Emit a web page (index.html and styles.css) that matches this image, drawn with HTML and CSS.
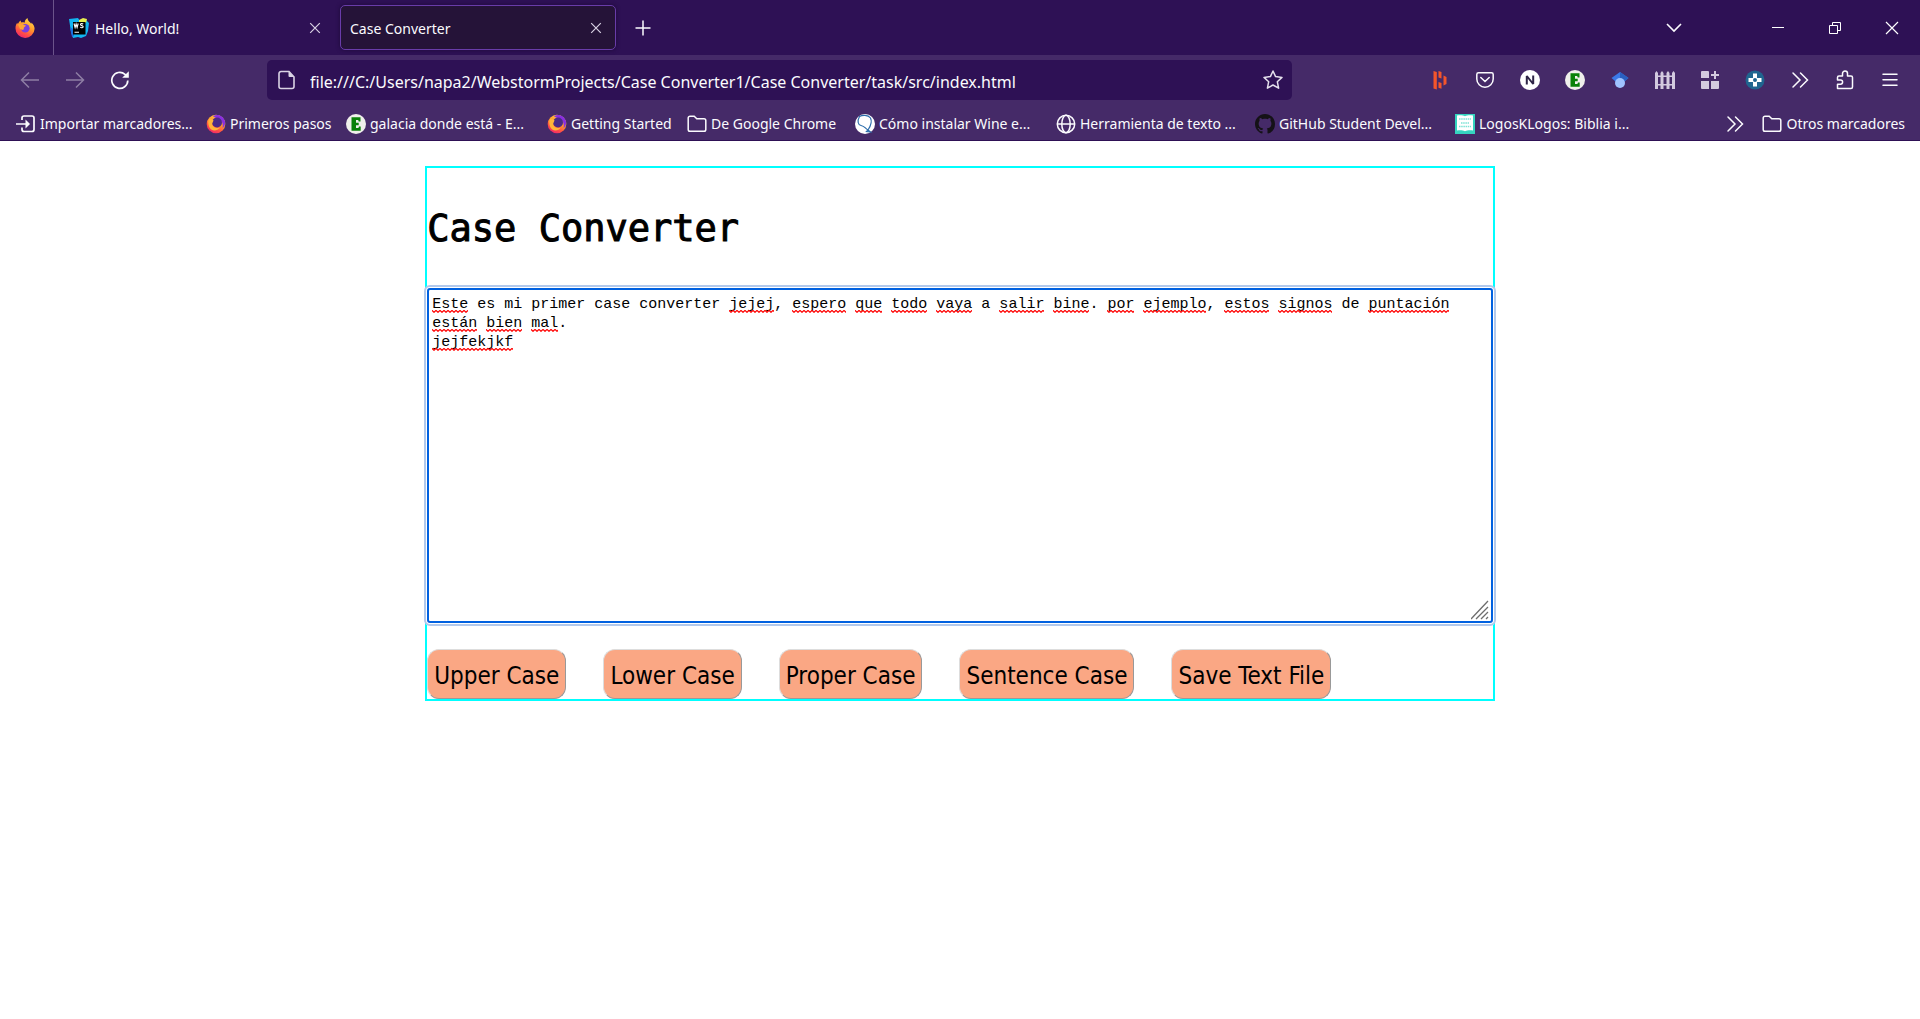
FILE: index.html
```html
<!DOCTYPE html>
<html lang="es">
<head>
<meta charset="utf-8">
<title>Case Converter</title>
<link rel="stylesheet" href="styles.css">
</head>
<body>
<svg class="defs" aria-hidden="true">
  <defs>
    <linearGradient id="flame" x1="0.8" y1="0" x2="0.3" y2="1">
      <stop offset="0" stop-color="#ffe14a"/><stop offset="0.45" stop-color="#ff9a2b"/><stop offset="0.75" stop-color="#ff4f45"/><stop offset="1" stop-color="#f0246e"/>
    </linearGradient>
    <symbol id="firefox" viewBox="0 0 20 20">
      <path fill="url(#flame)" d="M10 20A9.6 9.6 0 0 1 .5 10.3C.4 8 1.200 6 2.300 4.700c.1.7.3 1.100.6 1.400C3.600 4.500 4.500 3.300 5.800 2.600c-.1.800.1 1.400.6 1.900 1.100-.3 2.300-.2 3.300.2C9.700 2.800 10.700 1 12.500 0c.1 2 1 2.900 2.200 4 .7.700 1.200 1.300 1.500 2 .2-.5.200-1 .1-1.600C18.500 6.200 19.600 8.400 19.600 10.800A9.500 9.500 0 0 1 10 20z"/>
      <circle cx="10.300" cy="10.300" r="4.300" fill="#7a3ee0"/>
      <path fill="#ffa436" d="M3 6.500c2-1 4.500-.8 6.300.6l1.700.5c-.2 1-1.500 1.200-2 1.800-.4.700.2 2-1 2.700L5 11z"/>
    </symbol>
    <symbol id="firefox-ring" viewBox="0 0 20 20">
      <circle cx="10" cy="10" r="9.300" fill="url(#flame)"/>
      <path fill="#8a2fe0" d="M7 2.500C11-.5 17.500 1.500 19 7.500c.5 3-1 5.500-2.500 6.500 1-4-.5-8.500-5-9.500z"/>
      <circle cx="11" cy="8.500" r="5" fill="#4b2a86"/>
      <path fill="#ffb43a" d="M3 5c2-.6 3.500 0 4.500 1.500L6 10c.5 3 4 5 8 3.500-3 4-9 4-11-1C2 10 2 7 3 5z"/>
    </symbol>
    <symbol id="badge-e" viewBox="0 0 20 20">
      <circle cx="10" cy="10" r="10" fill="#efefeb"/>
      <path fill="#098109" d="M5.500 3.200h9v4.300h-1.800l-.5-1.500H10v2.700h2.700v2.600H10V14h2.400l.6-1.600h1.700v4.400H5.500z"/>
    </symbol>
    <symbol id="folder" viewBox="0 0 20 20">
      <path fill="none" stroke="#fbfbfe" stroke-width="1.500" d="M1.200 15.500V4A1.800 1.800 0 0 1 3 2.200h4.200l2.600 2.500H17a1.800 1.800 0 0 1 1.800 1.800v9a1.800 1.800 0 0 1-1.800 1.800H3a1.800 1.800 0 0 1-1.800-1.800z"/>
    </symbol>
    <symbol id="more" viewBox="0 0 20 20">
      <path fill="none" stroke="#fbfbfe" stroke-width="1.500" stroke-linecap="round" d="M3 3l7 7-7 7M10.500 3l7 7-7 7"/>
    </symbol>
    <symbol id="cross" viewBox="0 0 12 12">
      <path fill="none" stroke="#d9d2e4" stroke-width="1.200" d="M1.200 1.200l9.600 9.600M10.800 1.200l-9.600 9.600"/>
    </symbol>
  </defs>
</svg>

<header class="browser">
  <div class="tabs">
    <button class="view" aria-label="Firefox View"><svg class="i20"><use href="#firefox"/></svg></button>
    <div class="tab">
      <svg class="i20" viewBox="0 0 20 20">
        <path fill="#12b5f0" d="M0 1l9-1 2 3 6-1 3 3-1 8-2 5-5 2-3-1-5 1-2-6z"/><path fill="#e8ee4f" d="M10 2l4-2 4 1-1 4h-7z"/><path fill="#1a6fe0" d="M1 9l3 2 1 7-2 1z"/>
        <rect x="4" y="4" width="12.500" height="12.500"/>
        <path fill="none" stroke="#fff" stroke-width="1.100" d="M5 5.500l1.100 4 1-3.500 1 3.500 1.100-4M14.200 6.200c-1-1-2.800-.6-2.700.5.1 1.200 2.700.7 2.700 2 0 1.200-2 1.300-3 .4M5.500 14.300h4.500"/>
      </svg>
      <span class="tab-title">Hello, World!</span>
      <button class="close" aria-label="Cerrar Hello, World!"><svg class="i12"><use href="#cross"/></svg></button>
    </div>
    <div class="tab active">
      <span class="tab-title">Case Converter</span>
      <button class="close" aria-label="Cerrar Case Converter"><svg class="i12"><use href="#cross"/></svg></button>
    </div>
    <button class="new-tab" aria-label="Nueva pestaña"><svg class="i16" viewBox="0 0 16 16"><path fill="none" stroke="#fbfbfe" stroke-width="1.500" d="M8 .5v15M.5 8h15"/></svg></button>
    <div class="window-buttons">
      <button class="list-tabs" aria-label="Listar pestañas"><svg class="i16" viewBox="0 0 16 16"><path fill="none" stroke="#fbfbfe" stroke-width="1.600" d="M1 4l7 7 7-7"/></svg></button>
      <button aria-label="Minimizar"><svg class="i12" viewBox="0 0 12 12"><path fill="none" stroke="#fff" d="M0 5.500h12"/></svg></button>
      <button aria-label="Restaurar"><svg class="i12" viewBox="0 0 12 12"><path fill="none" stroke="#fff" d="M.5 3.500h8v8h-8zM3.500 3.500v-3h8v8h-3"/></svg></button>
      <button aria-label="Cerrar"><svg class="i14" viewBox="0 0 14 14"><path fill="none" stroke="#fff" stroke-width="1.200" d="M1 1l12 12M13 1L1 13"/></svg></button>
    </div>
  </div>

  <div class="toolbar">
    <div class="group">
      <button class="off" aria-label="Atrás"><svg class="i20" viewBox="0 0 20 20"><path fill="none" stroke="#fbfbfe" stroke-width="1.500" d="M19 10H2M9 2.500L1.500 10 9 17.500"/></svg></button>
      <button class="off" aria-label="Adelante"><svg class="i20" viewBox="0 0 20 20"><path fill="none" stroke="#fbfbfe" stroke-width="1.500" d="M1 10h17M11 2.500l7.500 7.500-7.500 7.500"/></svg></button>
      <button aria-label="Recargar"><svg class="i20" viewBox="0 0 20 20"><path fill="none" stroke="#fbfbfe" stroke-width="1.700" d="M17.800 10.500A8 8 0 1 1 15 4.300l2 1.700"/><path fill="#fbfbfe" d="M18.800 1.200v6.600h-6.600z"/></svg></button>
    </div>
    <div class="urlbar">
      <svg class="i20" viewBox="0 0 20 20"><path fill="none" stroke="#d9d2e4" stroke-width="1.600" d="M12 1.500H4A2 2 0 0 0 2 3.500v13a2 2 0 0 0 2 2h11a2 2 0 0 0 2-2V7z"/><path fill="#d9d2e4" d="M11.500 1l6 6H12.500a1 1 0 0 1-1-1z"/></svg>
      <input class="url" type="text" aria-label="Dirección" value="file:///C:/Users/napa2/WebstormProjects/Case Converter1/Case Converter/task/src/index.html">
      <button class="star" aria-label="Añadir a marcadores"><svg class="i20" viewBox="0 0 20 20"><path fill="none" stroke="#e4dfec" stroke-width="1.500" stroke-linejoin="round" d="M10 1l2.600 5.600 6.400.8-4.700 4.300 1.300 6.500L10 15l-5.600 3.200 1.300-6.500L1 7.400l6.400-.8z"/></svg></button>
    </div>
    <div class="group end">
      <button aria-label="Extensión H"><svg class="i20" viewBox="0 0 20 20"><path fill="#f4552b" d="M3.500 1L6.800 2v17.500l-3.300-1zM8.500 1L11.500 2v6.500l-3-1zM8.500 12l3 1v5.800l-3-1zM13.500 5.500l3 1.500v7l-3 1.500z"/></svg></button>
      <button aria-label="Pocket"><svg class="i20" viewBox="0 0 20 20"><g fill="none" stroke="#fbfbfe" stroke-width="1.500"><path d="M3.500 2.800h13A1.700 1.700 0 0 1 18.200 4.500V9a8.200 8.200 0 0 1-16.400 0V4.500A1.700 1.700 0 0 1 3.500 2.800z"/><path stroke-linecap="round" d="M5.800 7.500L10 11.500l4.200-4"/></g></svg></button>
      <button aria-label="Extensión N"><svg class="i20" viewBox="0 0 20 20"><circle cx="10" cy="10" r="10" fill="#fff"/><path fill="none" stroke="#2f2547" stroke-width="2" stroke-linejoin="bevel" d="M6.800 14.500V6l6.400 8V5.500"/></svg></button>
      <button aria-label="Extensión E"><svg class="i20"><use href="#badge-e"/></svg></button>
      <button aria-label="Google Scholar"><svg class="i20" viewBox="0 0 20 20"><path fill="#3b78e7" d="M10 2l8.500 6-4 3.500h-9L1.500 8z"/><path fill="#2a5fc0" d="M10 2l8.500 6-4 3.500L10 8z"/><circle cx="10" cy="13" r="5" fill="#a0c3ff"/></svg></button>
      <button aria-label="Cerca"><svg class="i20" viewBox="0 0 20 20"><path fill="#d3cadf" d="M0 3l1.500-2L3 3v16H0zM5.500 3L7 1l1.500 2v16h-3zM11.500 3L13 1l1.500 2v16h-3zM17 3l1.500-2L20 3v16h-3zM0 5.500h20V7H0zM0 14h20v1.500H0z"/></svg></button>
      <button aria-label="Cuadrícula"><svg class="i20" viewBox="0 0 20 20"><path fill="#d3cadf" d="M2 1h6a1 1 0 0 1 1 1v6H1V2a1 1 0 0 1 1-1zM1 11h8v8H2a1 1 0 0 1-1-1zM11 11h8v7a1 1 0 0 1-1 1h-7zM14 1h2v3h3v2h-3v3h-2V6h-3V4h3z"/></svg></button>
      <button aria-label="Extensión cruz"><svg class="i20" viewBox="0 0 20 20"><circle cx="10" cy="10" r="9.500" fill="#20658f"/><path fill="#fff" d="M8 3.500h4V8h4.500v4H12v4.500H8V12H3.500V8H8z"/><circle cx="10" cy="10" r="2" fill="#20658f"/></svg></button>
      <button aria-label="Más herramientas"><svg class="i20"><use href="#more"/></svg></button>
      <button aria-label="Extensiones"><svg class="i20" viewBox="0 0 20 20"><path fill="none" stroke="#fbfbfe" stroke-width="1.500" stroke-linejoin="round" d="M2.500 18.500v-4.300h3a2 2 0 0 0 0-4.200h-3V7.500A1.500 1.500 0 0 1 4 6h3.500V3.500a2.500 2.500 0 0 1 5 0V6H16a1.500 1.500 0 0 1 1.500 1.500V17a1.500 1.500 0 0 1-1.500 1.500z"/></svg></button>
      <button aria-label="Menú"><svg class="i20" viewBox="0 0 20 20"><path fill="none" stroke="#fbfbfe" stroke-width="1.500" stroke-linecap="round" d="M3 4.200h14M3 9.800h14M3 15.200h14"/></svg></button>
    </div>
  </div>

  <nav class="bookmarks">
    <div class="bookmark-list">
      <a href="#"><svg class="i20" viewBox="0 0 20 20"><path fill="none" stroke="#fbfbfe" stroke-width="1.700" d="M6 6V4a2 2 0 0 1 2-2h8a2 2 0 0 1 2 2v11.500a2 2 0 0 1-2 2H8a2 2 0 0 1-2-2v-2M0 10h11"/><path fill="#fbfbfe" d="M9.500 5.500L14 10l-4.500 4.500z"/></svg>Importar marcadores...</a>
      <a href="#"><svg class="i20"><use href="#firefox-ring"/></svg>Primeros pasos</a>
      <a href="#"><svg class="i20"><use href="#badge-e"/></svg>galacia donde está - E...</a>
      <a href="#"><svg class="i20"><use href="#firefox-ring"/></svg>Getting Started</a>
      <a href="#"><svg class="i20"><use href="#folder"/></svg>De Google Chrome</a>
      <a href="#"><svg class="i20" viewBox="0 0 20 20"><circle cx="10" cy="10" r="10" fill="#fff"/><path fill="none" stroke="#2b6cab" stroke-width="1.200" d="M4.500 2.500C2 7 3 11 6 11.500c4 .7 4 3 7 4.500 2-3 4.500-8 2.500-12C13 .5 7 1 4.500 2.500zM13 16l-1.500 1.500 4 .5z"/></svg>Cómo instalar Wine e...</a>
      <a href="#"><svg class="i20" viewBox="0 0 20 20"><g fill="none" stroke="#fbfbfe" stroke-width="1.500"><circle cx="10" cy="10" r="8.700"/><ellipse cx="10" cy="10" rx="4.200" ry="8.700"/><path d="M1.500 10h17"/></g></svg>Herramienta de texto ...</a>
      <a href="#"><svg class="i20" viewBox="0 0 16 16"><path fill="#151217" d="M8 0C3.580 0 0 3.580 0 8c0 3.540 2.290 6.530 5.470 7.590.4.070.55-.17.55-.38 0-.19-.01-.82-.01-1.490-2.010.37-2.530-.49-2.690-.94-.09-.23-.48-.94-.82-1.130-.28-.15-.68-.52-.01-.53.63-.01 1.080.58 1.230.82.72 1.210 1.870.87 2.330.66.070-.52.28-.87.51-1.070-1.780-.2-3.640-.89-3.640-3.950 0-.87.31-1.590.82-2.150-.08-.2-.36-1.020.08-2.120 0 0 .67-.21 2.200.82.64-.18 1.320-.27 2-.27s1.360.09 2 .27c1.530-1.040 2.200-.82 2.200-.82.44 1.100.16 1.920.08 2.120.51.56.82 1.270.82 2.150 0 3.070-1.870 3.750-3.650 3.950.29.25.54.73.54 1.480 0 1.070-.01 1.930-.01 2.200 0 .21.15.46.55.38A8.010 8.010 0 0 0 16 8c0-4.420-3.580-8-8-8z"/></svg>GitHub Student Devel...</a>
      <a href="#"><svg class="i20" viewBox="0 0 20 20"><path fill="#35d3bf" d="M0 0h20v20H0z"/><path fill="#fff" d="M2 1.500c3-.6 6-.3 8 .8 2-1.100 5-1.400 8-.8v15c-3-.5-6-.3-8 .8-2-1.100-5-1.300-8-.8z"/><path fill="none" stroke="#7ce2d5" stroke-width="1.300" stroke-dasharray="1.500 .7" d="M4 5h12M6 9h8M4 12.500h12"/></svg>LogosKLogos: Biblia i...</a>
    </div>
    <button class="overflow" aria-label="Mostrar más marcadores"><svg class="i20"><use href="#more"/></svg></button>
    <a href="#"><svg class="i20"><use href="#folder"/></svg>Otros marcadores</a>
  </nav>
</header>

<main class="converter">
  <h1>Case Converter</h1>
  <div class="editor">
    <textarea id="text" aria-label="Texto" spellcheck="false">Este es mi primer case converter jejej, espero que todo vaya a salir bine. por ejemplo, estos signos de puntación están bien mal.
jejfekjkf</textarea>
    <div class="spelling" id="spelling" aria-hidden="true"></div>
    <svg class="grip" viewBox="0 0 18 20" aria-hidden="true"><path fill="none" stroke="#6d6d6d" stroke-width="1.300" d="M0 19L17 1M5 19L17 7M10 19l7-7M15 19l2-2"/></svg>
  </div>
  <div class="actions">
    <button>Upper Case</button>
    <button>Lower Case</button>
    <button>Proper Case</button>
    <button>Sentence Case</button>
    <button>Save Text File</button>
  </div>
</main>
<script src="spelling.js"></script>
</body>
</html>
```
FILE: styles.css
```css
* { box-sizing: border-box; }

body {
  margin: 0;
  background: #fff;
  color: #000;
  font-family: "Noto Sans", "Open Sans", sans-serif;
}

button {
  border: 0;
  padding: 0;
  background: none;
  color: inherit;
  font: inherit;
}

svg { display: block; flex: none; }
.defs { position: absolute; width: 0; height: 0; }
.i12 { width: 12px; height: 12px; }
.i14 { width: 14px; height: 14px; }
.i16 { width: 16px; height: 16px; }
.i20 { width: 20px; height: 20px; }

/* Browser frame */
.browser {
  background: #452a68;
  border-bottom: 1px solid #2e1155;
  color: #fbfbfe;
  font-size: 14px;
  line-height: 20px;
}

.tabs {
  display: flex;
  align-items: center;
  height: 55px;
  background: #2e1155;
}

.view {
  display: flex;
  align-items: center;
  height: 55px;
  width: 54px;
  padding-left: 15px;
  border-right: 1px solid #6b548a;
}

.tab {
  display: flex;
  align-items: center;
  gap: 6px;
  width: 276px;
  height: 45px;
  margin-left: 5px;
  padding: 0 11px 0 9px;
  border: 1px solid transparent;
  border-radius: 5px;
}
.tab.active {
  background: #251338;
  border-color: #693ca9;
  box-shadow: 0 0 4px #1d0a38;
}
.tab-title { flex: 1; padding-top: 2px; }
.close { display: flex; padding: 2px; }

.new-tab { display: flex; padding: 12px; margin-left: 7px; }

.window-buttons { display: flex; margin-left: auto; }
.window-buttons button {
  display: flex;
  align-items: center;
  justify-content: center;
  width: 57px;
  height: 54px;
}
.window-buttons .list-tabs { margin-right: 47px; }

.toolbar {
  display: flex;
  align-items: center;
  justify-content: space-between;
  height: 50px;
  padding: 0 8px 0 7px;
}
.group { display: flex; }
.group button {
  display: flex;
  justify-content: center;
  width: 45px;
}
.off { opacity: .4; }

.urlbar {
  display: flex;
  align-items: center;
  gap: 13px;
  flex: 0 1 1025px;
  height: 40px;
  padding: 0 9px 0 10px;
  border-radius: 5px;
  background: #2e1155;
}
.url {
  flex: 1;
  min-width: 0;
  padding: 4px 0 0;
  border: 0;
  outline: 0;
  background: none;
  color: #fbfbfe;
  font: 16px/24px "Noto Sans", "Open Sans", sans-serif;
}

.bookmarks {
  display: flex;
  align-items: center;
  height: 35px;
  padding: 2px 15px 0 16px;
}
.bookmarks a {
  display: flex;
  align-items: center;
  gap: 4px;
  color: inherit;
  text-decoration: none;
  white-space: nowrap;
}
.bookmark-list {
  display: grid;
  grid-template-columns: 190px 140px 201px 140px 168px 201px 199px 200px 180px;
}
.overflow { margin: 0 17px 0 auto; }

/* Converter page */
.converter {
  width: 55.7%;
  margin: 25px auto 0;
  border: 2px solid #00ffff;
}

h1 {
  margin: 38px 0 37px;
  font: 500 37px/45px "DejaVu Sans Mono", monospace;
  -webkit-text-stroke: 1px #000;
}

.editor {
  position: relative;
  height: 335px;
  font: 15px/19px "Liberation Mono", monospace;
}

textarea {
  display: block;
  width: 100%;
  height: 100%;
  margin: 0;
  padding: 5px 3px;
  border: 2px solid #0061e0;
  border-radius: 3px;
  outline: 0;
  box-shadow: 0 0 0 1px #fff, 0 0 0 3px #b2c9ec;
  resize: none;
  font: inherit;
}

/* Marks under misspelt words, one grid column per character */
.spelling {
  position: absolute;
  inset: 6px 5px auto;
  display: grid;
  grid-auto-columns: 1ch;
  grid-auto-rows: 19px;
  pointer-events: none;
}
.spelling i {
  align-self: end;
  height: 3px;
  background: url("data:image/svg+xml,%3Csvg xmlns='http://www.w3.org/2000/svg' width='4' height='3'%3E%3Cpath fill='none' stroke='%23f00' stroke-width='1.200' d='M-1 -.5L2 2.300L5 -.5'/%3E%3C/svg%3E") repeat-x;
}

.grip {
  position: absolute;
  right: 4px;
  bottom: 3px;
  width: 18px;
  height: 20px;
  pointer-events: none;
}

.actions {
  display: flex;
  gap: 37px;
  padding: 26px 0 0;
}
.actions button {
  height: 50px;
  padding: 3px 6px 0;
  border: 1px solid;
  border-color: #ddd #999 #999 #ddd;
  border-radius: 12px;
  background: #faa784;
  font: 24px/30px "DejaVu Sans Condensed", "DejaVu Sans", sans-serif;
}
```
FILE: spelling.js
```js
// [line, first column, length] of each unknown word
const words = [
  [1, 0, 4], [1, 33, 5], [1, 40, 6], [1, 47, 3], [1, 51, 4], [1, 56, 4],
  [1, 63, 5], [1, 69, 4], [1, 75, 3], [1, 79, 7], [1, 88, 5], [1, 94, 6],
  [1, 104, 9], [2, 0, 5], [2, 6, 4], [2, 11, 3], [3, 0, 9]
];
const layer = document.getElementById("spelling");
for (const [line, start, length] of words) {
  const mark = document.createElement("i");
  mark.style.gridArea = `${line} / ${start + 1} / auto / span ${length}`;
  layer.append(mark);
}
```
